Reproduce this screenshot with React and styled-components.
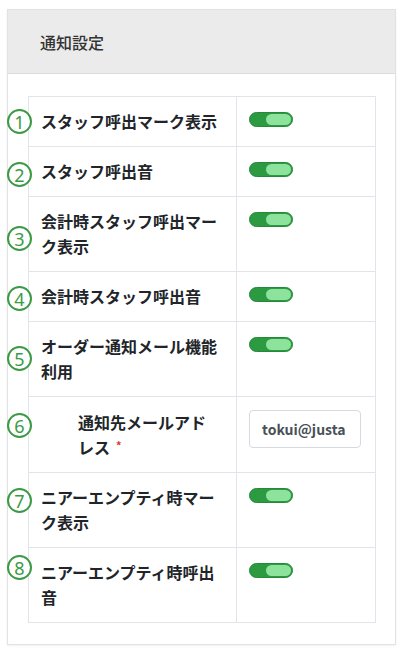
import React from "react";
import styled, { createGlobalStyle } from "styled-components";

const GlobalStyle = createGlobalStyle`
  body {
    margin: 0;
    background: #fff;
    font-family: "Noto Sans CJK JP", "Noto Sans", sans-serif;
    color: #212529;
  }
`;

const Page = styled.div`
  padding: 9px 4px 9px 7px;
`;

const Card = styled.div`
  border: 1px solid #e2e2e2;
  box-shadow: 0 1px 2px rgba(0, 0, 0, 0.06);
  background: #fff;
`;

const CardHeader = styled.div`
  height: 63px;
  display: flex;
  align-items: center;
  padding-left: 32px;
  background: #ebebeb;
  border-bottom: 1px solid #dcdcdc;
  font-size: 16px;
  font-weight: 500;
  color: #333;
`;

const CardBody = styled.div`
  padding: 22px 19px 21px 20px;
`;

const Table = styled.table`
  width: 100%;
  border-collapse: collapse;
`;

const Row = styled.tr`
  border: 1px solid #e1e5ea;
`;

const LabelCell = styled.td`
  position: relative;
  width: 183px;
  padding: 12px;
  border-right: 1px solid #e1e5ea;
  vertical-align: top;
  font-size: 16px;
  font-weight: 700;
  line-height: 25px;
`;

const ValueCell = styled.td`
  padding: 12px;
  vertical-align: top;
`;

const Label = styled.div`
  padding-left: ${(p) => (p.$indent ? "37px" : "0")};
  padding-top: ${(p) => (p.$indent ? "1px" : "0")};
  max-width: ${(p) => (p.$indent ? "138px" : "none")};
`;

const LabelText = styled.span``;

const Required = styled.span`
  display: inline-block;
  color: #e3342f;
  font-size: 11px;
  line-height: 1;
  vertical-align: 4px;
  margin-left: 6px;
`;

const Marker = styled.span`
  position: absolute;
  left: -22px;
  top: ${(p) => p.$top}px;
  width: 21px;
  height: 21px;
  border: 2px solid #3c9a45;
  border-radius: 50%;
  display: flex;
  align-items: center;
  justify-content: center;
  color: #3c9a45;
  font-family: "Noto Sans", sans-serif;
  font-size: 18px;
  font-weight: 400;
  line-height: 1;
  background: #fff;
`;

const Toggle = styled.span`
  display: block;
  margin-top: 3px;
  width: 44px;
  height: 15px;
  box-sizing: border-box;
  border-radius: 8px;
  background: #2b9a40;
  border: 1px solid #25883b;
  position: relative;
`;

const Knob = styled.span`
  position: absolute;
  right: 1px;
  top: 1px;
  width: 25px;
  height: 11px;
  border-radius: 6px;
  background: #8de39c;
`;

const Input = styled.div`
  width: 112px;
  height: 38px;
  margin-top: 1px;
  box-sizing: border-box;
  border: 1px solid #d5dae0;
  border-radius: 4px;
  padding: 0 12px;
  display: flex;
  align-items: center;
  overflow: hidden;
  white-space: nowrap;
  font-size: 14px;
  font-weight: 700;
  color: #495057;
`;

const settings = [
  { no: 1, label: "スタッフ呼出マーク表示", top: 12 },
  { no: 2, label: "スタッフ呼出音", top: 15 },
  { no: 3, label: "会計時スタッフ呼出マーク表示", top: 29 },
  { no: 4, label: "会計時スタッフ呼出音", top: 14 },
  { no: 5, label: "オーダー通知メール機能利用", top: 24 },
  { no: 6, label: "通知先メールアドレス", top: 16, email: "tokui@justa" },
  { no: 7, label: "ニアーエンプティ時マーク表示", top: 15 },
  { no: 8, label: "ニアーエンプティ時呼出音", top: 7 },
];

const App = () => {
  return (
    <Page>
      <GlobalStyle />
      <Card>
        <CardHeader>通知設定</CardHeader>
        <CardBody>
          <Table>
            <tbody>
              {settings.map((s) => (
                <Row key={s.no}>
                  <LabelCell>
                    <Marker $top={s.top}>{s.no}</Marker>
                    <Label $indent={!!s.email}>
                      <LabelText>{s.label}</LabelText>
                      {s.email && <Required>*</Required>}
                    </Label>
                  </LabelCell>
                  <ValueCell>
                    {s.email ? (
                      <Input>{s.email}</Input>
                    ) : (
                      <Toggle>
                        <Knob />
                      </Toggle>
                    )}
                  </ValueCell>
                </Row>
              ))}
            </tbody>
          </Table>
        </CardBody>
      </Card>
    </Page>
  );
};

export default App;
